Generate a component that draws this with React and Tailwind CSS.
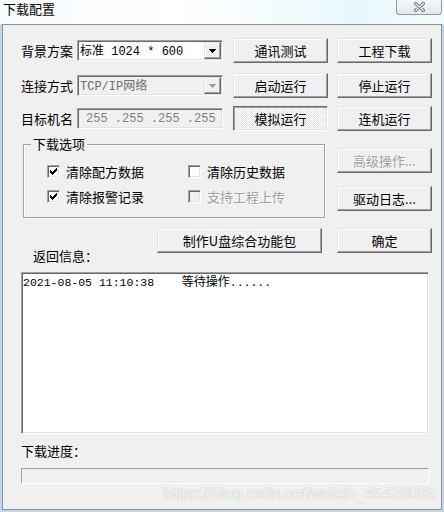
import React from 'react';

const raised =
  'border border-t-[#e3e3e3] border-l-[#e3e3e3] border-r-[#696969] border-b-[#696969] shadow-[inset_-1px_-1px_0_#a0a0a0,inset_1px_1px_0_#ffffff] bg-[#f0f0f0]';
const sunken =
  'border border-t-[#a0a0a0] border-l-[#a0a0a0] border-r-white border-b-white shadow-[inset_1px_1px_0_#696969,inset_-1px_-1px_0_#e3e3e3]';
const mono = "[font-family:'Liberation_Mono',monospace]";

const Btn = ({ children, w = 'w-[95px]', disabled, pressed }) => (
  <div
    className={
      pressed
        ? `flex items-center justify-center h-[25px] ${w} border border-t-[#696969] border-l-[#696969] border-r-white border-b-white shadow-[inset_1px_1px_0_#a0a0a0,inset_-1px_-1px_0_#e3e3e3] bg-[repeating-conic-gradient(#ffffff_0%_25%,#e6e6e6_0%_50%)] bg-[length:2px_2px]`
        : `flex items-center justify-center h-[25px] ${w} ${raised}`
    }
  >
    <span
      className={`text-[13px] leading-[14px] ${
        disabled ? 'text-[#a0a0a0] [text-shadow:1px_1px_0_#ffffff]' : 'text-black'
      }`}
    >
      {children}
    </span>
  </div>
);

const Arrow = ({ disabled }) => (
  <div className={`w-[17px] h-[17px] flex items-center justify-center ${raised}`}>
    <svg width="7" height="4" viewBox="0 0 7 4">
      <path
        d="M0 0h7v1h-1v1h-1v1h-1v1h-1v-1h-1v-1h-1v-1h-1z"
        fill={disabled ? '#a0a0a0' : '#000000'}
      />
    </svg>
  </div>
);

const Check = ({ checked, disabled }) => (
  <div
    className={`w-[13px] h-[13px] flex items-center justify-center ${sunken} ${
      disabled ? 'bg-[#f0f0f0]' : 'bg-white'
    }`}
  >
    {checked && (
      <svg width="7" height="7" viewBox="0 0 7 7">
        <path
          d="M0 2h1v3h-1z M1 3h1v3h-1z M2 4h1v3h-1z M3 3h1v3h-1z M4 2h1v3h-1z M5 1h1v3h-1z M6 0h1v3h-1z"
          fill="#000000"
        />
      </svg>
    )}
  </div>
);

const Option = ({ label, checked, disabled }) => (
  <div className="flex items-center h-[13px]">
    <Check checked={checked} disabled={disabled} />
    <span
      className={`ml-[6px] text-[13px] leading-[14px] ${
        disabled ? 'text-[#a0a0a0] [text-shadow:1px_1px_0_#ffffff]' : 'text-black'
      }`}
    >
      {label}
    </span>
  </div>
);

const Label = ({ children }) => (
  <div className="w-[56px] text-[13px] leading-[14px] text-black">{children}</div>
);

export default function App() {
  return (
    <div className="w-[444px] h-[512px] overflow-hidden bg-[#c0d6ea] [font-family:'Noto_Sans_CJK_SC',sans-serif]">
      {/* title bar */}
      <div className="h-[24px] flex justify-between items-start bg-[linear-gradient(to_right,#f6fbfe,#ffffff_40%,#e8f8fd_80%,#f4fbfe)]">
        <div className="pl-[3px] pt-[2px] text-[13px] leading-[14px] text-black">下载配置</div>
        <div className="mr-[2px] w-[46px] h-[15px] border border-t-0 border-[#8d99a6] rounded-b-[4px] bg-[linear-gradient(to_bottom,#f4f6f8,#e3e8ee)] flex items-center justify-center">
          <svg width="13" height="10" viewBox="0 0 13 10">
            <path d="M2.5 1.5 L10.5 8.5 M10.5 1.5 L2.5 8.5" stroke="#5f6b78" strokeWidth="3" strokeLinecap="round" />
            <path d="M2.5 1.5 L10.5 8.5 M10.5 1.5 L2.5 8.5" stroke="#ffffff" strokeWidth="1.3" strokeLinecap="round" />
          </svg>
        </div>
      </div>

      {/* client */}
      <div className="ml-[2px] w-[440px] h-[486px] border border-[#8e8f8f] bg-[#f0f0f0] overflow-hidden">
        {/* row A */}
        <div className="flex mt-[13px]">
          <div className="ml-[18px] flex flex-col">
            <div className="flex items-center h-[25px]">
              <Label>背景方案</Label>
              <div className={`w-[146px] h-[21px] bg-white flex items-center justify-between pl-[2px] pr-[1px] ${sunken}`}>
                <span className="text-[12px] leading-[14px] text-black whitespace-pre">
                  标准<span className={`${mono} text-[12px]`}> 1024 * 600</span>
                </span>
                <Arrow />
              </div>
            </div>
            <div className="flex items-center h-[25px] mt-[10px]">
              <Label>连接方式</Label>
              <div className={`w-[146px] h-[21px] bg-[#f0f0f0] flex items-center justify-between pl-[2px] pr-[1px] ${sunken}`}>
                <span className="text-[12px] leading-[14px] text-[#6d6d6d]">
                  <span className={`${mono} text-[12px]`}>TCP/IP</span>网络
                </span>
                <Arrow disabled />
              </div>
            </div>
            <div className="flex items-center h-[25px] mt-[8px]">
              <Label>目标机名</Label>
              <div className={`w-[146px] h-[21px] bg-[#f0f0f0] flex items-center pl-[8px] ${sunken}`}>
                <span className={`${mono} text-[12px] leading-[14px] text-[#808080] whitespace-pre`}>
                  255 .255 .255 .255
                </span>
              </div>
            </div>
          </div>
          <div className="ml-[10px] flex flex-col">
            <Btn>通讯测试</Btn>
            <div className="mt-[10px]"><Btn>启动运行</Btn></div>
            <div className="mt-[8px]"><Btn pressed>模拟运行</Btn></div>
          </div>
          <div className="ml-[9px] flex flex-col">
            <Btn>工程下载</Btn>
            <div className="mt-[10px]"><Btn>停止运行</Btn></div>
            <div className="mt-[8px]"><Btn>连机运行</Btn></div>
          </div>
        </div>

        {/* row B */}
        <div className="flex mt-[13px]">
          <div className="ml-[20px] relative w-[302px] h-[74px] border border-[#a0a0a0] shadow-[inset_1px_1px_0_#ffffff,1px_1px_0_#ffffff]">
            <div className="absolute left-[7px] -top-[8px] px-[2px] bg-[#f0f0f0] text-[13px] leading-[14px] text-black">
              下载选项
            </div>
            <div className="pl-[23px] pt-[20px] grid grid-cols-[141px_1fr] gap-y-[12px]">
              <Option label="清除配方数据" checked />
              <Option label="清除历史数据" />
              <Option label="清除报警记录" checked />
              <Option label="支持工程上传" disabled />
            </div>
          </div>
          <div className="ml-[12px] pt-[4px] flex flex-col">
            <Btn disabled>高级操作...</Btn>
            <div className="mt-[13px]"><Btn>驱动日志...</Btn></div>
          </div>
        </div>

        {/* row C */}
        <div className="flex mt-[10px]">
          <div className="w-[154px] pl-[30px] pt-[21px] text-[13px] leading-[14px] text-black">返回信息：</div>
          <Btn w="w-[165px]">制作U盘综合功能包</Btn>
          <div className="ml-[15px]"><Btn>确定</Btn></div>
        </div>

        {/* output */}
        <div className={`ml-[18px] mt-[9px] w-[408px] h-[162px] bg-white pl-[1px] pt-[1px] ${sunken}`}>
          <div className="text-[12px] leading-[14px] text-black whitespace-pre">
            <span className={`${mono} text-[11.5px]`}>2021-08-05 11:10:38    </span>
            等待操作<span className={`${mono} text-[11.5px]`}>......</span>
          </div>
        </div>

        <div className="ml-[18px] mt-[10px] text-[13px] leading-[14px] text-black">下载进度：</div>

        <div className="ml-[18px] mt-[10px] w-[408px] h-[16px] border border-t-[#a0a0a0] border-l-[#a0a0a0] border-r-white border-b-white bg-[#f0f0f0]" />

        <div className="flex justify-end pr-[5px] mt-[1px]">
          <span className="[font-family:'Liberation_Sans',Arial,sans-serif] text-[16px] leading-[18px] text-[#f6f6f6] [text-shadow:0_0_1px_#a8a8a8]">
            https://blog.csdn.net/weixin_45426095
          </span>
        </div>
      </div>
    </div>
  );
}
